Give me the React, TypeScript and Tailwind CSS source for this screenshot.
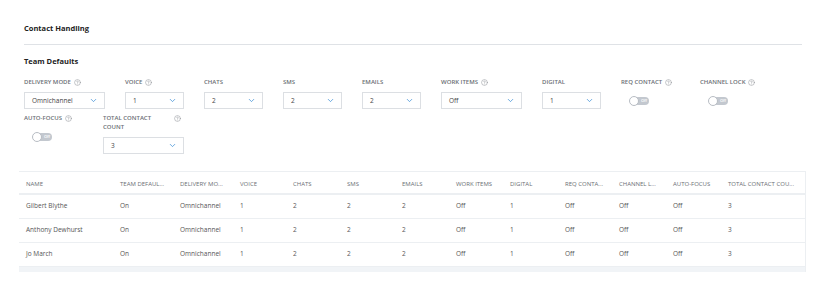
import { CircleHelp, ChevronDown } from "lucide-react";

type Field = {
  label: string;
  help?: boolean;
  kind: "select" | "toggle";
  value?: string;
  wide?: boolean;
  twoLine?: boolean;
};

const fields: Field[] = [
  { label: "Delivery Mode", help: true, kind: "select", value: "Omnichannel", wide: true },
  { label: "Voice", help: true, kind: "select", value: "1" },
  { label: "Chats", kind: "select", value: "2" },
  { label: "SMS", kind: "select", value: "2" },
  { label: "Emails", kind: "select", value: "2" },
  { label: "Work Items", help: true, kind: "select", value: "Off", wide: true },
  { label: "Digital", kind: "select", value: "1" },
  { label: "Req Contact", help: true, kind: "toggle" },
  { label: "Channel Lock", help: true, kind: "toggle" },
  { label: "Auto-Focus", help: true, kind: "toggle" },
  { label: "Total Contact Count", help: true, kind: "select", value: "3", wide: true, twoLine: true },
];

const columns = [
  { name: "Name", w: "w-[94px]" },
  { name: "Team Defaul...", w: "w-[60px]" },
  { name: "Delivery Mo...", w: "w-[60px]" },
  { name: "Voice", w: "w-[53px]" },
  { name: "Chats", w: "w-[54px]" },
  { name: "SMS", w: "w-[55px]" },
  { name: "Emails", w: "w-[54px]" },
  { name: "Work Items", w: "w-[54px]" },
  { name: "Digital", w: "w-[55px]" },
  { name: "Req Conta...", w: "w-[54px]" },
  { name: "Channel L...", w: "w-[54px]" },
  { name: "Auto-Focus", w: "w-[55px]" },
  { name: "Total Contact Cou...", w: "w-[85px]" },
];

const agents = ["Gilbert Blythe", "Anthony Dewhurst", "Jo March"];

function Help() {
  return <CircleHelp className="w-[7px] h-[7px] text-[#8d9196] shrink-0" strokeWidth={1.75} />;
}

function Toggle() {
  return (
    <div className="relative mt-[10px] ml-[9px] w-[19px] h-[8px] rounded-full bg-[#c3c8cf]">
      <div className="absolute left-[-1px] top-[-1px] w-[10px] h-[10px] rounded-full bg-white border border-[#b8bdc4]" />
      <span className="absolute right-[2px] top-0 text-[4px] leading-[8px] font-semibold text-white">
        Off
      </span>
    </div>
  );
}

function Select({ value, wide }: { value: string; wide?: boolean }) {
  return (
    <div
      className={`flex items-center justify-between h-[17px] border border-[#dcdfe3] bg-white pl-[7px] pr-[6px] ${
        wide ? "w-[81px]" : "w-[59px]"
      }`}
    >
      <span className="text-[6.5px] text-[#444]">{value}</span>
      <ChevronDown className="w-[9px] h-[9px] text-[#3d8fd6]" strokeWidth={2} />
    </div>
  );
}

export default function App() {
  return (
    <div className="w-[818px] h-[286px] bg-white font-['Open_Sans',sans-serif] text-[#333]">
      <div className="pl-6 pr-4 pt-[23px]">
        <h2 className="text-[7.5px] leading-[10px] font-bold text-[#222]">Contact Handling</h2>
        <div className="mt-[11px] w-[778px] border-b border-[#dfe2e6]" />
        <h3 className="mt-[11px] text-[7.5px] leading-[10px] font-bold text-[#222]">Team Defaults</h3>

        <div className="mt-[12px] flex flex-wrap gap-x-5 gap-y-[5px] w-[778px]">
          {fields.map((f) => (
            <div key={f.label} className={f.wide ? "w-[81px]" : "w-[59px]"}>
              <div className="flex items-start justify-between">
                <div className="flex items-center gap-[3px]">
                  <span
                    className={`uppercase text-[6px] leading-[9px] font-semibold text-[#6b6f75] ${
                      f.twoLine ? "w-[52px]" : "whitespace-nowrap"
                    }`}
                  >
                    {f.label}
                  </span>
                  {f.help && !f.twoLine && <Help />}
                </div>
                {f.help && f.twoLine && (
                  <div className="h-[9px] flex items-center pr-[3px]">
                    <Help />
                  </div>
                )}
              </div>
              {f.kind === "select" ? (
                <div className="mt-[5px]">
                  <Select value={f.value ?? ""} wide={f.wide} />
                </div>
              ) : (
                <Toggle />
              )}
            </div>
          ))}
        </div>
      </div>

      <div className="ml-[19px] mt-[17px] w-[787px] border-t border-r border-[#eceff2]">
        <table className="table-fixed border-collapse w-full">
          <colgroup>
            {columns.map((c) => (
              <col key={c.name} className={c.w} />
            ))}
          </colgroup>
          <thead>
            <tr className="h-[22px] border-b-2 border-[#eceff2]">
              {columns.map((c) => (
                <th
                  key={c.name}
                  className="pl-[7px] pt-[3px] text-left uppercase text-[6px] font-normal text-[#6b6f75] whitespace-nowrap overflow-hidden"
                >
                  {c.name}
                </th>
              ))}
            </tr>
          </thead>
          <tbody>
            {agents.map((a) => (
              <tr key={a} className="h-[24px] border-b border-[#eceff2]">
                {[a, "On", "Omnichannel", "1", "2", "2", "2", "Off", "1", "Off", "Off", "Off", "3"].map(
                  (v, i) => (
                    <td key={i} className="pl-[7px] text-[6.5px] text-[#555] whitespace-nowrap overflow-hidden">
                      {v}
                    </td>
                  )
                )}
              </tr>
            ))}
          </tbody>
        </table>
        <div className="h-[5px] bg-[#f1f4f7]" />
      </div>
    </div>
  );
}
